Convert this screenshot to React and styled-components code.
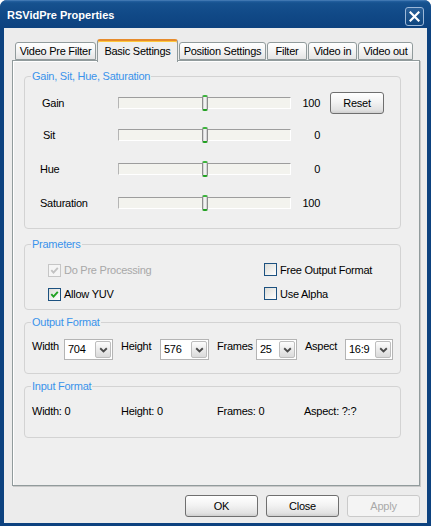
import React from 'react';
import styled, { createGlobalStyle } from 'styled-components';

const Global = createGlobalStyle`
  html, body { margin: 0; padding: 0; background: #ffffff; }
  body { font-family: "Liberation Sans", Arial, sans-serif; font-size: 11px; color: #000; }
  * { box-sizing: border-box; }
`;

const Window = styled.div`
  width: 431px;
  height: 526px;
  display: flex;
  flex-direction: column;
  background: #0d427f;
  border-radius: 7px 7px 0 0;
  overflow: hidden;
`;

const TitleBar = styled.div`
  height: 28px;
  flex: none;
  display: flex;
  align-items: flex-start;
  justify-content: space-between;
  padding: 0 7px;
  background: linear-gradient(to bottom, #5a8cc2 0, #2461a0 1px, #16528f 3px, #114a88 45%, #0d427f 100%);
`;

const Title = styled.div`
  margin-top: 9px;
  color: #fff;
  font-weight: bold;
  font-size: 11px;
  line-height: 13px;
`;

const CloseBtn = styled.div`
  margin-top: 7px;
  width: 19px;
  height: 19px;
  border: 1px solid #9db8d8;
  border-radius: 3px;
  background: linear-gradient(to bottom, #2a6099, #0f467f);
  display: flex;
  align-items: center;
  justify-content: center;
`;

const Client = styled.div`
  flex: 1;
  margin: 0 4px 3px 4px;
  background: #ececec;
  padding: 11px 0 0 8px;
  display: flex;
  flex-direction: column;
`;

const TabRow = styled.div`
  position: relative;
  z-index: 2;
  height: 21px;
  display: flex;
  align-items: flex-end;
  gap: 1px;
  padding-left: 3px;
`;

const Tab = styled.div`
  width: ${p => p.$w}px;
  height: ${p => (p.$active ? 23 : 18)}px;
  margin-bottom: ${p => (p.$active ? -2 : 0)}px;
  display: flex;
  align-items: ${p => (p.$active ? 'flex-start' : 'center')};
  padding-top: ${p => (p.$active ? 4 : 0)}px;
  justify-content: center;
  font-size: 11px;
  letter-spacing: -0.25px;
  line-height: 13px;
  white-space: nowrap;
  border: 1px solid #919b9c;
  border-bottom: ${p => (p.$active ? 'none' : '1px solid #919b9c')};
  border-top: ${p => (p.$active ? '2px solid #e68b2c' : '1px solid #919b9c')};
  border-radius: 3px 3px 0 0;
  background: ${p => (p.$active ? '#efefef' : 'linear-gradient(to bottom, #ffffff 0, #f4f4f4 50%, #e4e4e4 100%)')};
  box-shadow: ${p => (p.$active ? 'inset 0 1px 0 #ffc83c' : 'none')};
`;

const Panel = styled.div`
  position: relative;
  z-index: 1;
  width: 408px;
  height: 426px;
  border: 1px solid #919b9c;
  background: #efefef;
  box-shadow: inset 1px 1px 0 #ffffff, 1px 1px 0 #c9c9c9;
  padding: 9px 0 0 11px;
  display: flex;
  flex-direction: column;
`;

const Group = styled.fieldset`
  width: 377px;
  min-width: 0;
  margin: ${p => p.$mt}px 0 0 0;
  padding: ${p => p.$pt}px 0 ${p => p.$pb}px 0;
  border: 1px solid #d3d3d3;
  border-radius: 4px;
`;

const Legend = styled.legend`
  margin-left: 6px;
  padding: 0 1px;
  color: #3a93eb;
  font-size: 11px;
  letter-spacing: -0.25px;
  line-height: 12px;
`;

const SliderRow = styled.div`
  height: ${p => p.$h}px;
  display: grid;
  grid-template-columns: 93px 173px 29px 1fr;
  align-items: center;
`;

const Label = styled.span`
  padding-left: ${p => p.$pl || 0}px;
  font-size: 11px;
  letter-spacing: -0.25px;
  line-height: 14px;
  white-space: nowrap;
  color: ${p => (p.$disabled ? '#a8a8a8' : '#000')};
`;

const Track = styled.div`
  position: relative;
  height: 12px;
  background: #f3f3ee;
  border-top: 1px solid #9d9d9d;
  border-left: 1px solid #b5b5b5;
  border-bottom: 1px solid #ffffff;
  border-right: 1px solid #ffffff;
`;

const Thumb = styled.div`
  position: absolute;
  top: -3px;
  width: 6px;
  height: 16px;
  transform: translateX(-50%);
  border: 1px solid #8c8c8c;
  border-top: 2px solid #3cb43c;
  border-bottom: 2px solid #21a121;
  border-radius: 2px;
  background: linear-gradient(to right, #c9c9c9, #ffffff 50%, #c4c4c4);
`;

const Value = styled.span`
  text-align: right;
  font-size: 11px;
  letter-spacing: -0.25px;
`;

const Button = styled.button`
  width: ${p => p.$w}px;
  height: 22px;
  margin-left: ${p => p.$ml || 0}px;
  padding: 0;
  font-family: "Liberation Sans", Arial, sans-serif;
  font-size: 11px;
  letter-spacing: -0.25px;
  color: ${p => (p.disabled ? '#a9a9a9' : '#000')};
  border: 1px solid ${p => (p.disabled ? '#cacaca' : '#6f6f6f')};
  border-radius: 3px;
  background: ${p => (p.disabled ? '#f4f4f4' : 'linear-gradient(to bottom, #ffffff 0, #f3f3f3 45%, #e2e2e2 85%, #cfcfcf 100%)')};
`;

const CheckGrid = styled.div`
  display: grid;
  grid-template-columns: 216px 1fr;
  grid-auto-rows: 24px;
  padding-left: 23px;
  align-items: center;
`;

const CheckItem = styled.label`
  display: flex;
  align-items: center;
  gap: 3px;
  margin-top: ${p => p.$mt || 0}px;
`;

const Box = styled.span`
  width: 13px;
  height: 13px;
  flex: none;
  display: inline-flex;
  align-items: center;
  justify-content: center;
  border: 1px solid ${p => (p.$disabled ? '#c6c6c6' : '#1c5180')};
  background: ${p => (p.$disabled ? '#f5f5f5' : 'linear-gradient(135deg, #dcdcd7, #ffffff)')};
`;

const FieldRow = styled.div`
  display: flex;
  align-items: flex-start;
  gap: 8px;
  padding-left: 7px;
`;

const Field = styled.div`
  display: flex;
  align-items: flex-start;
`;

const FieldLabel = styled.span`
  width: ${p => p.$w}px;
  font-size: 11px;
  letter-spacing: -0.25px;
  line-height: 14px;
  white-space: nowrap;
`;

const Combo = styled.div`
  width: ${p => p.$w}px;
  height: 21px;
  display: flex;
  border: 1px solid #b4b4b4;
  background: #fff;
`;

const ComboValue = styled.span`
  flex: 1;
  padding-left: 3px;
  font-size: 11px;
  letter-spacing: -0.25px;
  line-height: 19px;
`;

const DropBtn = styled.span`
  width: 16px;
  margin: 1px;
  display: flex;
  align-items: center;
  justify-content: center;
  border: 1px solid #bdbdbd;
  border-radius: 2px;
  background: linear-gradient(to bottom, #fdfdfd, #dadada);
`;

const InfoRow = styled.div`
  display: grid;
  grid-template-columns: 89px 96px 87px 1fr;
  padding-left: 7px;
  font-size: 11px;
  letter-spacing: -0.25px;
  line-height: 14px;
`;

const ButtonBar = styled.div`
  width: 408px;
  margin-top: 9px;
  display: flex;
  justify-content: flex-end;
  gap: 8px;
`;

const CheckMark = ({ color }) => (
  <svg width="9" height="9" viewBox="0 0 9 9">
    <path d="M1.3 4.2 L3.5 6.6 L7.8 1.8" fill="none" stroke={color} strokeWidth="1.9" />
  </svg>
);

const Chevron = () => (
  <svg width="9" height="6" viewBox="0 0 9 6">
    <path d="M1.2 1.2 L4.5 4.4 L7.8 1.2" fill="none" stroke="#4a4a4a" strokeWidth="1.9" />
  </svg>
);

const CloseX = () => (
  <svg width="11" height="11" viewBox="0 0 11 11">
    <path d="M1.5 1.5 L9.5 9.5 M9.5 1.5 L1.5 9.5" stroke="#fff" strokeWidth="2.2" strokeLinecap="square" />
  </svg>
);

const tabs = [
  { label: 'Video Pre Filter', w: 81 },
  { label: 'Basic Settings', w: 81, active: true },
  { label: 'Position Settings', w: 87 },
  { label: 'Filter', w: 40 },
  { label: 'Video in', w: 49 },
  { label: 'Video out', w: 55 },
];

const sliders = [
  { label: 'Gain', pl: 17, value: 100, h: 32, reset: true },
  { label: 'Sit', pl: 18, value: 0, h: 32 },
  { label: 'Hue', pl: 15, value: 0, h: 36 },
  { label: 'Saturation', pl: 15, value: 100, h: 32 },
];

const formats = [
  { label: 'Width', lw: 32, value: '704', cw: 49 },
  { label: 'Height', lw: 39, value: '576', cw: 49 },
  { label: 'Frames', lw: 39, value: '25', cw: 41 },
  { label: 'Aspect', lw: 40, value: '16:9', cw: 48 },
];

const Check = ({ label, checked, disabled, mt }) => (
  <CheckItem $mt={mt}>
    <Box $disabled={disabled}>{checked && <CheckMark color={disabled ? '#c2c2c2' : '#21a121'} />}</Box>
    <Label $disabled={disabled}>{label}</Label>
  </CheckItem>
);

export default function App() {
  return (
    <>
      <Global />
      <Window>
        <TitleBar>
          <Title>RSVidPre Properties</Title>
          <CloseBtn><CloseX /></CloseBtn>
        </TitleBar>
        <Client>
          <TabRow>
            {tabs.map(t => (
              <Tab key={t.label} $w={t.w} $active={t.active}>{t.label}</Tab>
            ))}
          </TabRow>
          <Panel>
            <Group $mt={0} $pt={5} $pb={9}>
              <Legend>Gain, Sit, Hue, Saturation</Legend>
              {sliders.map(s => (
                <SliderRow key={s.label} $h={s.h}>
                  <Label $pl={s.pl}>{s.label}</Label>
                  <Track>
                    <Thumb style={{ left: '50%' }} />
                  </Track>
                  <Value>{s.value}</Value>
                  <div>{s.reset && <Button $w={54} $ml={10}>Reset</Button>}</div>
                </SliderRow>
              ))}
            </Group>
            <Group $mt={9} $pt={8} $pb={3}>
              <Legend>Prameters</Legend>
              <CheckGrid>
                <Check label="Do Pre Processing" checked disabled />
                <Check label="Free Output Format" mt={-1} />
                <Check label="Allow YUV" checked />
                <Check label="Use Alpha" mt={-1} />
              </CheckGrid>
            </Group>
            <Group $mt={6} $pt={11} $pb={13}>
              <Legend>Output Format</Legend>
              <FieldRow>
                {formats.map(f => (
                  <Field key={f.label}>
                    <FieldLabel $w={f.lw}>{f.label}</FieldLabel>
                    <Combo $w={f.cw}>
                      <ComboValue>{f.value}</ComboValue>
                      <DropBtn><Chevron /></DropBtn>
                    </Combo>
                  </Field>
                ))}
              </FieldRow>
            </Group>
            <Group $mt={6} $pt={12} $pb={19}>
              <Legend>Input Format</Legend>
              <InfoRow>
                <span>Width: 0</span>
                <span>Height: 0</span>
                <span>Frames: 0</span>
                <span>Aspect: ?:?</span>
              </InfoRow>
            </Group>
          </Panel>
          <ButtonBar>
            <Button $w={73}>OK</Button>
            <Button $w={73}>Close</Button>
            <Button $w={73} disabled>Apply</Button>
          </ButtonBar>
        </Client>
      </Window>
    </>
  );
}
